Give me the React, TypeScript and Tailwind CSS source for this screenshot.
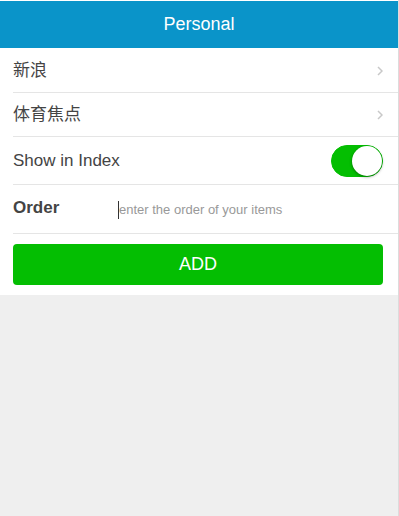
import { useState } from 'react';

const font = { fontFamily: '"Liberation Sans", Arial, "Noto Sans CJK SC", sans-serif' };

type Item = { id: string; name: string };

const items: Item[] = [
  { id: 'sina', name: '新浪' },
  { id: 'sports', name: '体育焦点' },
];

function Chevron() {
  return (
    <svg width="6" height="10" viewBox="0 0 6 10" className="shrink-0">
      <path d="M1 1l4 4-4 4" fill="none" stroke="#c8c8c8" strokeWidth="1.5" />
    </svg>
  );
}

function Toggle({ on, onChange }: { on: boolean; onChange: (v: boolean) => void }) {
  return (
    <button
      type="button"
      onClick={() => onChange(!on)}
      className={
        on
          ? 'relative h-[32px] w-[52px] rounded-full bg-[#04be02] border border-[#04be02]'
          : 'relative h-[32px] w-[52px] rounded-full bg-[#dfdfdf] border border-[#dfdfdf]'
      }
    >
      <span
        className={
          on
            ? 'absolute top-0 right-0 h-[30px] w-[30px] rounded-full bg-white shadow-[0_1px_3px_rgba(0,0,0,0.4)]'
            : 'absolute top-0 left-0 h-[30px] w-[30px] rounded-full bg-white shadow-[0_1px_3px_rgba(0,0,0,0.4)]'
        }
      />
    </button>
  );
}

export default function App() {
  const [showInIndex, setShowInIndex] = useState(true);
  const [order, setOrder] = useState('');

  return (
    <div className="min-h-[516px] w-[399px] bg-[#efefef] border-r border-[#dcdcdc]" style={font}>
      <div className="pt-px bg-white">
        <header className="flex h-[47px] items-center justify-center bg-[#0a94c9]">
          <h1 className="text-[18px] text-white">Personal</h1>
        </header>
      </div>

      <section className="bg-white pl-[13px]">
        {items.map((item, i) => (
          <div
            key={item.id}
            className={
              i === 0
                ? 'flex h-[45px] items-center justify-between border-b border-[#e5e5e5] pr-[15px] pt-px text-[17px] text-[#444]'
                : 'flex h-[44px] items-center justify-between border-b border-[#e5e5e5] pr-[15px] text-[17px] text-[#444]'
            }
          >
            <span>{item.name}</span>
            <Chevron />
          </div>
        ))}

        <div className="flex h-[48px] items-center justify-between border-b border-[#e5e5e5] pr-[15px] text-[17px] text-[#444]">
          <span>Show in Index</span>
          <Toggle on={showInIndex} onChange={setShowInIndex} />
        </div>

        <div className="flex h-[49px] items-start border-b border-[#e5e5e5] pr-[15px]">
          <label className="w-[105px] pt-[10px] text-[17px] font-bold text-[#444]">Order</label>
          <div className="flex flex-1 items-center pt-[15px]">
            <span className="h-[18px] w-px bg-[#333]" />
            <input
              className="flex-1 bg-transparent text-[13px] text-[#333] outline-none placeholder:text-[#999]"
              style={font}
              placeholder="enter the order of your items"
              value={order}
              onChange={(e) => setOrder(e.target.value)}
            />
          </div>
        </div>

        <div className="pr-[15px] pt-[10px] pb-[10px]">
          <button className="h-[41px] w-full rounded-[4px] bg-[#04be02] text-[18px] text-white">ADD</button>
        </div>
      </section>
    </div>
  );
}
